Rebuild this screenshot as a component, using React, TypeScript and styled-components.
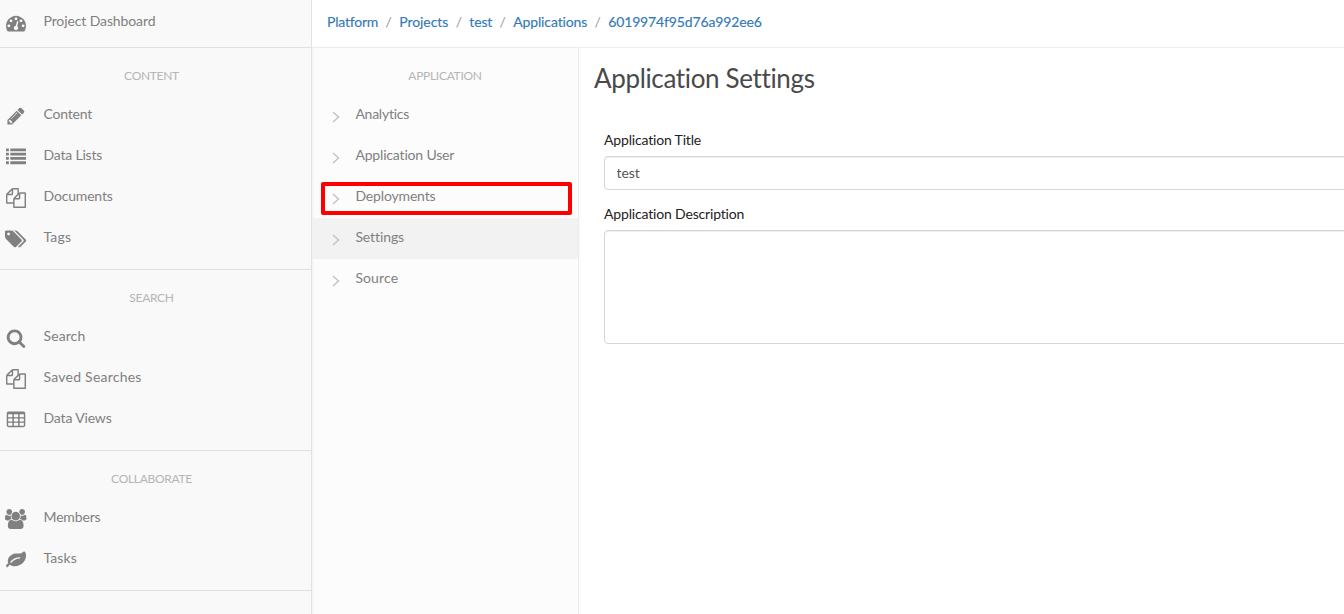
import React from 'react';
import styled, { createGlobalStyle } from 'styled-components';

const GlobalStyle = createGlobalStyle`
  *, *::before, *::after { box-sizing: border-box; }
  html, body { margin: 0; height: 100%; overflow: hidden; }
  body {
    background: #fff;
    color: #333;
    font-family: Lato, 'Open Sans', sans-serif;
    font-size: 14px;
    line-height: 20px;
    font-variant-ligatures: none;
  }
`;

const Page = styled.div`
  display: flex;
  height: 100vh;
  overflow: hidden;
`;

const Sidebar = styled.nav`
  flex: 0 0 312px;
  background: #f9f9f9;
  border-right: 1px solid #e3e3e3;
`;

const Group = styled.section<{ $first?: boolean }>`
  padding: ${p => (p.$first ? '2px 0 4px' : '0 0 10px')};
  border-bottom: 1px solid #e0e0e0;
`;

const GroupTitle = styled.h2<{ $shift?: number }>`
  margin: 0;
  height: 47px;
  padding: 8px ${p => p.$shift ?? 8}px 0 0;
  line-height: 40px;
  font-size: 12px;
  font-weight: 400;
  letter-spacing: -0.3px;
  text-align: center;
  text-transform: uppercase;
  color: #b5b5b5;
`;

const NavRow = styled.a<{ $spacing?: number }>`
  display: flex;
  align-items: center;
  height: 41px;
  color: #808080;
  text-decoration: none;
  letter-spacing: ${p => p.$spacing ?? 0}px;
`;

const NavIcon = styled.span`
  flex: 0 0 43.5px;
  display: flex;
  justify-content: center;
  padding: 1px 11.5px 0 0;
  color: #808080;
`;

const NavLabel = styled.span`
  padding-bottom: 4px;
`;

const Workspace = styled.div`
  flex: 1;
  min-width: 0;
  display: flex;
  flex-direction: column;
`;

const Breadcrumb = styled.header`
  flex: 0 0 48px;
  display: flex;
  align-items: center;
  padding: 0 0 3px 15px;
  border-bottom: 1px solid #eee;
`;

const Crumb = styled.a<{ $spacing?: number }>`
  color: #337ab7;
  text-decoration: none;
  letter-spacing: ${p => p.$spacing ?? 0}px;
  -webkit-text-stroke: 0.15px #337ab7;
`;

const Slash = styled.span`
  width: 21px;
  text-align: center;
  color: #999;
`;

const Columns = styled.div`
  flex: 1;
  display: flex;
  min-height: 0;
`;

const SubNav = styled.nav`
  flex: 0 0 267px;
  background: #fcfcfc;
  border-right: 1px solid #ececec;
  box-shadow: inset 3px 0 3px -2px rgba(0, 0, 0, 0.05), 1px 0 3px rgba(0, 0, 0, 0.03);
`;

const SubRow = styled(NavRow)<{ $active?: boolean }>`
  position: relative;
  background: ${p => (p.$active ? '#f2f2f2' : 'transparent')};
`;

const SubIcon = styled.span`
  flex: 0 0 43.4px;
  display: flex;
  padding: 2px 0 0 20px;
  color: #c4c4c4;
`;

const Highlight = styled.span`
  position: absolute;
  left: 9px;
  top: 5px;
  width: 251px;
  height: 33px;
  border: 4px solid #f00;
  border-radius: 2px;
`;

const Main = styled.main`
  flex: 1;
  min-width: 0;
  padding: 13px 0 0 15px;
`;

const Title = styled.h1`
  margin: 0;
  font-size: 26px;
  line-height: 34px;
  font-weight: 400;
  letter-spacing: -0.35px;
  color: #4a4a4a;
`;

const Form = styled.form`
  width: 900px;
  padding: 34px 0 0 10px;
`;

const Field = styled.div`
  display: flex;
  flex-direction: column;
  margin-bottom: 13px;
`;

const Label = styled.label`
  height: 27px;
  line-height: 22px;
  letter-spacing: -0.17px;
  color: #222;
`;

const Input = styled.input`
  height: 34px;
  padding: 5px 12px 7px 11.5px;
  border: 1px solid #d6d6d6;
  border-radius: 4px;
  box-shadow: inset 0 1px 1px rgba(0, 0, 0, 0.075);
  background: #fff;
  color: #555;
  font: inherit;
  letter-spacing: -0.1px;
  outline: none;
`;

const TextArea = styled.textarea`
  height: 114px;
  padding: 6px 12px;
  border: 1px solid #d6d6d6;
  border-radius: 4px;
  box-shadow: inset 0 1px 1px rgba(0, 0, 0, 0.075);
  background: #fff;
  font: inherit;
  resize: none;
  outline: none;
`;

const bars = [128, 512, 896, 1280];
const cells = [384, 768, 1152];

const icons = {
  dashboard: { w: 1792, d: 'M384 1152q0-53-37.5-90.5t-90.5-37.5-90.5 37.5-37.5 90.5 37.5 90.5 90.5 37.5 90.5-37.5 37.5-90.5zm192-448q0-53-37.5-90.5t-90.5-37.5-90.5 37.5-37.5 90.5 37.5 90.5 90.5 37.5 90.5-37.5 37.5-90.5zm428 481l101-382q6-26-7.5-48.5t-38.5-29.5-48 6.5-30 39.5l-101 382q-60 5-107 43.5t-63 98.5q-20 77 20 146t117 89 146-20 89-117q16-60-6-117t-72-91zm660-33q0-53-37.5-90.5t-90.5-37.5-90.5 37.5-37.5 90.5 37.5 90.5 90.5 37.5 90.5-37.5 37.5-90.5zm-640-640q0-53-37.5-90.5t-90.5-37.5-90.5 37.5-37.5 90.5 37.5 90.5 90.5 37.5 90.5-37.5 37.5-90.5zm448 192q0-53-37.5-90.5t-90.5-37.5-90.5 37.5-37.5 90.5 37.5 90.5 90.5 37.5 90.5-37.5 37.5-90.5zm320 448q0 261-141 483-19 29-54 29h-1402q-35 0-54-29-141-221-141-483 0-182 71-348t191-286 286-191 348-71 348 71 286 191 191 286 71 348z' },
  pencil: { w: 1792, d: 'M491 1536l91-91-235-235-91 91v107h128v128h107zm523-928q0-22-22-22-10 0-17 7l-542 542q-7 7-7 17 0 22 22 22 10 0 17-7l542-542q7-7 7-17zm-54-192l416 416-832 832h-416v-416zm683 96q0 53-37 90l-166 166-416-416 166-165q36-38 90-38 53 0 91 38l235 234q37 39 37 91z' },
  list: { w: 1792, d: bars.map(y => `M32 ${y}h192q32 0 32 32v192q0 32-32 32h-192q-32 0-32-32v-192q0-32 32-32zM416 ${y}h1344q32 0 32 32v192q0 32-32 32h-1344q-32 0-32-32v-192q0-32 32-32z`).join('') },
  files: { w: 1792, d: 'M1696 384q40 0 68 28t28 68v1216q0 40-28 68t-68 28h-960q-40 0-68-28t-28-68v-288h-544q-40 0-68-28t-28-68v-672q0-40 20-88t48-76l408-408q28-28 76-48t88-20h416q40 0 68 28t28 68v328q68-40 128-40h416zm-544 213l-299 299h299v-299zm-640-384l-299 299h299v-299zm196 647l316-316v-416h-384v416q0 40-28 68t-68 28h-416v640h512v-256q0-40 20-88t48-76zm956 804v-1152h-384v416q0 40-28 68t-68 28h-416v640h896z' },
  tags: { w: 1920, d: 'M448 448q0-53-37.5-90.5t-90.5-37.5-90.5 37.5-37.5 90.5 37.5 90.5 90.5 37.5 90.5-37.5 37.5-90.5zm1067 576q0 53-37 90l-491 492q-39 37-91 37-53 0-90-37l-715-716q-38-37-64.5-101t-26.5-117v-416q0-52 38-90t90-38h416q53 0 117 26.5t102 64.5l715 714q37 39 37 91zm384 0q0 53-37 90l-491 492q-39 37-91 37-36 0-59-14t-53-45l470-470q37-37 37-90 0-52-37-91l-715-714q-38-38-102-64.5t-117-26.5h224q53 0 117 26.5t102 64.5l715 714q37 39 37 91z' },
  search: { w: 1792, d: 'M1216 832q0-185-131.5-316.5t-316.5-131.5-316.5 131.5-131.5 316.5 131.5 316.5 316.5 131.5 316.5-131.5 131.5-316.5zm512 832q0 52-38 90t-90 38q-54 0-90-38l-343-342q-179 124-399 124-143 0-273.5-55.5t-225-150-150-225-55.5-273.5 55.5-273.5 150-225 225-150 273.5-55.5 273.5 55.5 225 150 150 225 55.5 273.5q0 220-124 399l343 343q37 37 37 90z' },
  table: { w: 1792, d: 'M224 128h1344q160 0 160 160v1088q0 160-160 160h-1344q-160 0-160-160v-1088q0-160 160-160z' + cells.map(y => [192, 704, 1216].map(x => `M${x + 32} ${y}h320q32 0 32 32v192q0 32-32 32h-320q-32 0-32-32v-192q0-32 32-32z`).join('')).join('') },
  users: { w: 1920, d: 'M593 896q-162 5-265 128h-134q-82 0-138-40.5t-56-118.5q0-353 124-353 6 0 43.5 21t97.5 42.5 119 21.5q67 0 133-23-5 37-5 66 0 139 81 256zm1071 637q0 120-73 189.5t-194 69.5h-874q-121 0-194-69.5t-73-189.5q0-53 3.5-103.5t14-109 26.5-108.5 43-97.5 62-81 85.5-53.5 111.5-20q10 0 43 21.5t73 48 107 48 135 21.5 135-21.5 107-48 73-48 43-21.5q61 0 111.5 20t85.5 53.5 62 81 43 97.5 26.5 108.5 14 109 3.5 103.5zm-1024-1277q0 106-75 181t-181 75-181-75-75-181 75-181 181-75 181 75 75 181zm704 384q0 159-112.5 271.5t-271.5 112.5-271.5-112.5-112.5-271.5 112.5-271.5 271.5-112.5 271.5 112.5 112.5 271.5zm576 225q0 78-56 118.5t-138 40.5h-134q-103-123-265-128 81-117 81-256 0-29-5-66 66 23 133 23 59 0 119-21.5t97.5-42.5 43.5-21q124 0 124 353zm-128-609q0 106-75 181t-181 75-181-75-75-181 75-181 181-75 181 75 75 181z' },
  leaf: { w: 1792, d: 'M1280 704q0-26-19-45t-45-19q-172 0-318 49.5t-259.5 134-235.5 219.5q-19 21-19 45 0 26 19 45t45 19q24 0 45-19 27-24 74-71t67-66q137-124 268.5-176t313.5-52q26 0 45-19t19-45zm512-198q0 95-20 193-46 224-184.5 383t-357.5 268q-214 108-438 108-148 0-286-47-15-5-88-42t-96-37q-16 0-39.5 32t-45 70-52.5 70-60 32q-43 0-63.5-17.5t-45.5-59.5q-2-4-6-11t-5.5-10-3-9.5-1.5-13.5q0-35 31-73.5t68-65.5 68-56 31-48q0-4-14-38t-16-44q-9-51-9-104 0-115 43.5-220t119-184.5 170.5-139 204-95.5q55-18 145-25.5t179.5-9 178.5-6 163.5-24 113.5-56.5l29.5-29.5 29.5-28 27-20 36.5-16 43.5-4.5q39 0 70.5 46t47.5 112 24 124 8 96z' },
};

type IconName = keyof typeof icons;

const Glyph = ({ name }: { name: IconName }) => {
  const { w, d } = icons[name];
  return (
    <svg width={(w / 1792) * 20} height={20} viewBox={`0 0 ${w} 1792`} fill="currentColor">
      <path fillRule="evenodd" d={d} />
    </svg>
  );
};

type Item = { icon: IconName; label: string; spacing?: number };

const Entry = ({ icon, label, spacing }: Item) => (
  <NavRow $spacing={spacing}>
    <NavIcon><Glyph name={icon} /></NavIcon>
    <NavLabel>{label}</NavLabel>
  </NavRow>
);

const groups: { title: string; items: Item[] }[] = [
  { title: 'Content', items: [
    { icon: 'pencil', label: 'Content', spacing: -0.2 },
    { icon: 'list', label: 'Data Lists', spacing: -0.2 },
    { icon: 'files', label: 'Documents', spacing: -0.17 },
    { icon: 'tags', label: 'Tags', spacing: 0.2 },
  ] },
  { title: 'Search', items: [
    { icon: 'search', label: 'Search', spacing: 0.1 },
    { icon: 'files', label: 'Saved Searches', spacing: 0.24 },
    { icon: 'table', label: 'Data Views', spacing: -0.15 },
  ] },
  { title: 'Collaborate', items: [
    { icon: 'users', label: 'Members', spacing: -0.15 },
    { icon: 'leaf', label: 'Tasks', spacing: 0.1 },
  ] },
];

const subItems: { label: string; spacing?: number; active?: boolean; marked?: boolean }[] = [
  { label: 'Analytics', spacing: -0.25 },
  { label: 'Application User', spacing: -0.17 },
  { label: 'Deployments', spacing: -0.15, marked: true },
  { label: 'Settings', spacing: -0.1, active: true },
  { label: 'Source', spacing: 0.12 },
];

const crumbs: { label: string; spacing?: number }[] = [
  { label: 'Platform', spacing: -0.2 },
  { label: 'Projects', spacing: -0.05 },
  { label: 'test', spacing: -0.15 },
  { label: 'Applications', spacing: -0.13 },
  { label: '6019974f95d76a992ee6', spacing: -0.14 },
];

export default function App() {
  return (
    <Page>
      <GlobalStyle />
      <Sidebar>
        <Group $first>
          <Entry icon="dashboard" label="Project Dashboard" spacing={-0.11} />
        </Group>
        {groups.map(g => (
          <Group key={g.title}>
            <GroupTitle>{g.title}</GroupTitle>
            {g.items.map(i => <Entry key={i.label} {...i} />)}
          </Group>
        ))}
      </Sidebar>
      <Workspace>
        <Breadcrumb>
          {crumbs.map((c, i) => (
            <React.Fragment key={c.label}>
              {i > 0 && <Slash>/</Slash>}
              <Crumb $spacing={c.spacing}>{c.label}</Crumb>
            </React.Fragment>
          ))}
        </Breadcrumb>
        <Columns>
          <SubNav>
            <GroupTitle $shift={0}>Application</GroupTitle>
            {subItems.map(s => (
              <SubRow key={s.label} $active={s.active} $spacing={s.spacing}>
                <SubIcon>
                  <svg width="8" height="12" viewBox="0 0 8 12" fill="none" stroke="currentColor" strokeWidth="1.5">
                    <path d="M1 1l5.5 5L1 11" />
                  </svg>
                </SubIcon>
                <NavLabel>{s.label}</NavLabel>
                {s.marked && <Highlight />}
              </SubRow>
            ))}
          </SubNav>
          <Main>
            <Title>Application Settings</Title>
            <Form>
              <Field>
                <Label htmlFor="title">Application Title</Label>
                <Input id="title" defaultValue="test" />
              </Field>
              <Field>
                <Label htmlFor="description">Application Description</Label>
                <TextArea id="description" />
              </Field>
            </Form>
          </Main>
        </Columns>
      </Workspace>
    </Page>
  );
}
